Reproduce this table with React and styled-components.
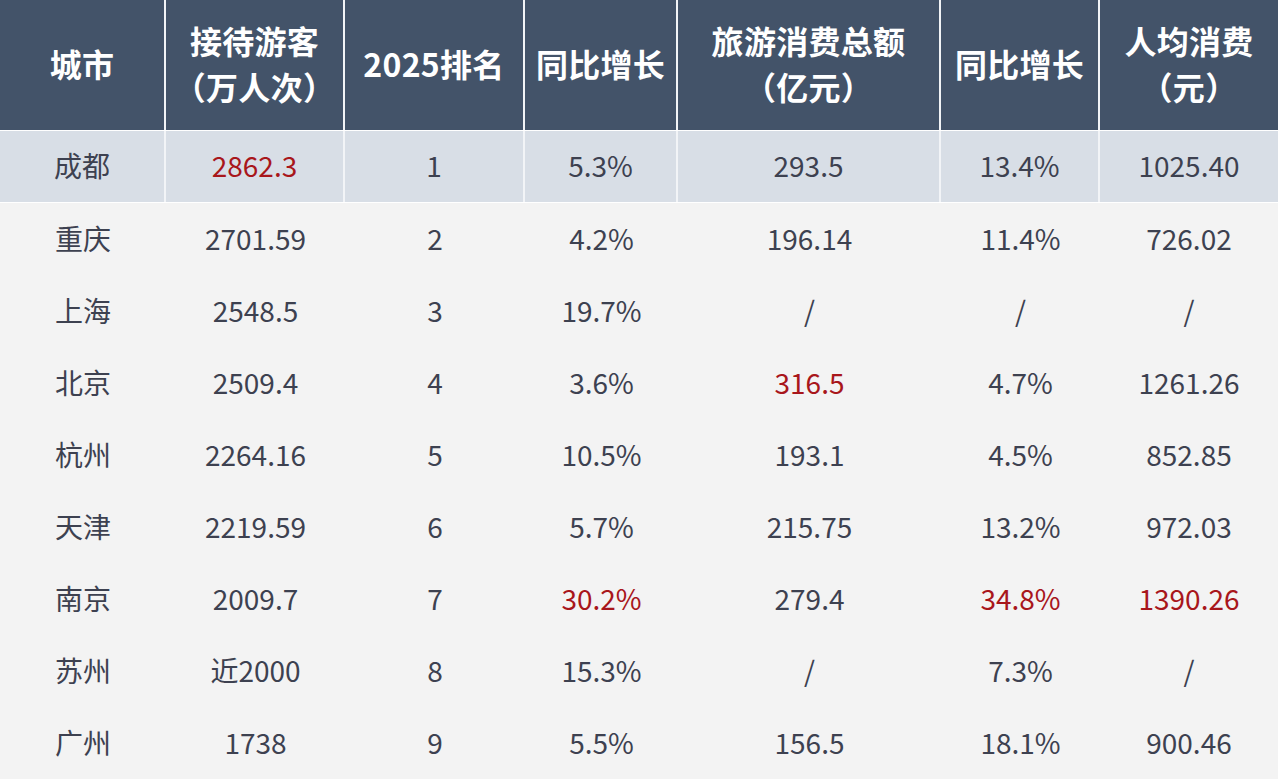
import React from "react";
import styled, { createGlobalStyle } from "styled-components";

const Global = createGlobalStyle`
  html, body { margin: 0; padding: 0; background: #ffffff; }
  body { font-family: "Noto Sans CJK SC", "Noto Sans", sans-serif; }
`;

const COLS = "166px 179px 180px 153px 263px 159px 178px";

const Table = styled.div`
  width: 1278px;
  display: flex;
  flex-direction: column;
  background: #ffffff;
`;

const Row = styled.div`
  display: grid;
  grid-template-columns: ${COLS};
  height: ${(p) => p.$h}px;
  background: ${(p) => p.$bg};
  margin-top: ${(p) => p.$mt || 0}px;
`;

const HeadCell = styled.div`
  display: flex;
  align-items: center;
  justify-content: center;
  text-align: center;
  background: #435369;
  color: #ffffff;
  font-weight: 700;
  font-size: 32px;
  line-height: 46px;
  letter-spacing: 0.3px;
  border-right: ${(p) => (p.$last ? "none" : "2px solid #f2f4f7")};
  padding-bottom: 4px;
  box-sizing: border-box;
`;

const Cell = styled.div`
  display: flex;
  align-items: center;
  justify-content: center;
  font-size: 28px;
  font-weight: 400;
  color: ${(p) => (p.$red ? "#a8161b" : "#3d4150")};
  border-right: ${(p) => (p.$divided && !p.$last ? "2px solid #f2f4f7" : "none")};
  box-sizing: border-box;
  padding-bottom: 3px;
`;

const headers = [
  ["城市"],
  ["接待游客", "（万人次）"],
  ["2025排名"],
  ["同比增长"],
  ["旅游消费总额", "（亿元）"],
  ["同比增长"],
  ["人均消费", "（元）"],
];

const rows = [
  ["成都", "2862.3", "1", "5.3%", "293.5", "13.4%", "1025.40"],
  ["重庆", "2701.59", "2", "4.2%", "196.14", "11.4%", "726.02"],
  ["上海", "2548.5", "3", "19.7%", "/", "/", "/"],
  ["北京", "2509.4", "4", "3.6%", "316.5", "4.7%", "1261.26"],
  ["杭州", "2264.16", "5", "10.5%", "193.1", "4.5%", "852.85"],
  ["天津", "2219.59", "6", "5.7%", "215.75", "13.2%", "972.03"],
  ["南京", "2009.7", "7", "30.2%", "279.4", "34.8%", "1390.26"],
  ["苏州", "近2000", "8", "15.3%", "/", "7.3%", "/"],
  ["广州", "1738", "9", "5.5%", "156.5", "18.1%", "900.46"],
];

const reds = { "0-1": true, "3-4": true, "6-3": true, "6-5": true, "6-6": true };

export default function App() {
  return (
    <>
      <Global />
      <Table>
        <Row $h={130} $bg="#435369">
          {headers.map((h, i) => (
            <HeadCell key={i} $last={i === headers.length - 1}>
              <div>
                {h.map((line, j) => (
                  <div key={j}>{line}</div>
                ))}
              </div>
            </HeadCell>
          ))}
        </Row>
        {rows.map((r, ri) => (
          <Row
            key={ri}
            $h={ri === 0 ? 71 : 72}
            $bg={ri === 0 ? "#d8dee6" : "#f3f3f3"}
            $mt={ri === 0 ? 1 : ri === 1 ? 1 : 0}
          >
            {r.map((c, ci) => (
              <Cell
                key={ci}
                $red={reds[`${ri}-${ci}`]}
                $divided={ri === 0}
                $last={ci === r.length - 1}
              >
                {c}
              </Cell>
            ))}
          </Row>
        ))}
      </Table>
    </>
  );
}
